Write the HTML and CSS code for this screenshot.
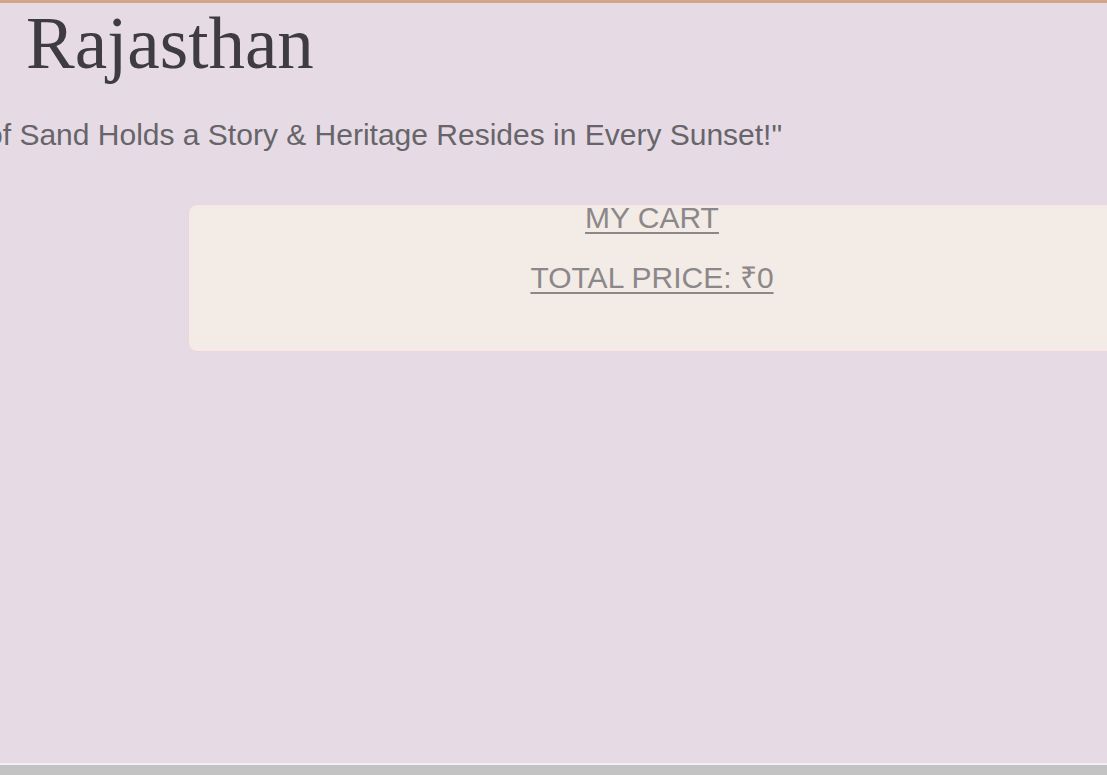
FILE: index.html
```html
<!DOCTYPE html>
<html lang="en">
<head>
<meta charset="utf-8">
<title>Rajasthan</title>
<link rel="stylesheet" href="styles.css">
</head>
<body>
<div class="page">
  <main class="main">
    <header class="hero">
      <h1 class="title">Rajasthan</h1>
      <p class="tagline">"Where Every Grain of Sand Holds a Story &amp; Heritage Resides in Every Sunset!"</p>
    </header>
    <section class="cart">
      <h2 class="cart-title">MY CART</h2>
      <p class="cart-total">TOTAL PRICE: ₹0</p>
    </section>
  </main>
  <footer class="footer"></footer>
</div>
</body>
</html>
```

FILE: styles.css
```css
* { box-sizing: border-box; }

html, body {
  margin: 0;
  padding: 0;
  height: 100%;
  overflow: hidden;
}

body {
  background: #e6dbe4;
  font-family: "Liberation Sans", Arial, sans-serif;
}

.page {
  display: flex;
  flex-direction: column;
  height: 775px;
  border-top: 3px solid #d3a587;
}

.main {
  flex: 1;
  display: flex;
  flex-direction: column;
  overflow: hidden;
}

.hero {
  display: flex;
  flex-direction: column;
}

.title {
  margin: 4px 0 0 26px;
  font-family: "Liberation Serif", "Times New Roman", serif;
  font-weight: 400;
  font-size: 73px;
  line-height: 1;
  color: #3e3c41;
}

.tagline {
  margin: 40px 0 0 -288px;
  white-space: nowrap;
  font-size: 30px;
  line-height: 1;
  color: #67646a;
}

.cart {
  margin: 54px 0 0 188px;
  width: 928px;
  flex-shrink: 0;
  height: 148px;
  background: #f3ebe6;
  border: 1px solid #f6cfe0;
  border-radius: 9px;
  display: flex;
  flex-direction: column;
  align-items: center;
  color: #8c8789;
}

.cart-title,
.cart-total {
  margin: 0;
  font-weight: 400;
  font-size: 30px;
  line-height: 1;
  text-decoration: underline;
  text-decoration-thickness: 2px;
  text-underline-offset: 4px;
}

.cart-title {
  margin-top: -2px;
}

.cart-total {
  margin-top: 30px;
}

.footer {
  flex: 0 0 12px;
  border-top: 2px solid #f1eff1;
  background: #c3c3c3;
}
```
